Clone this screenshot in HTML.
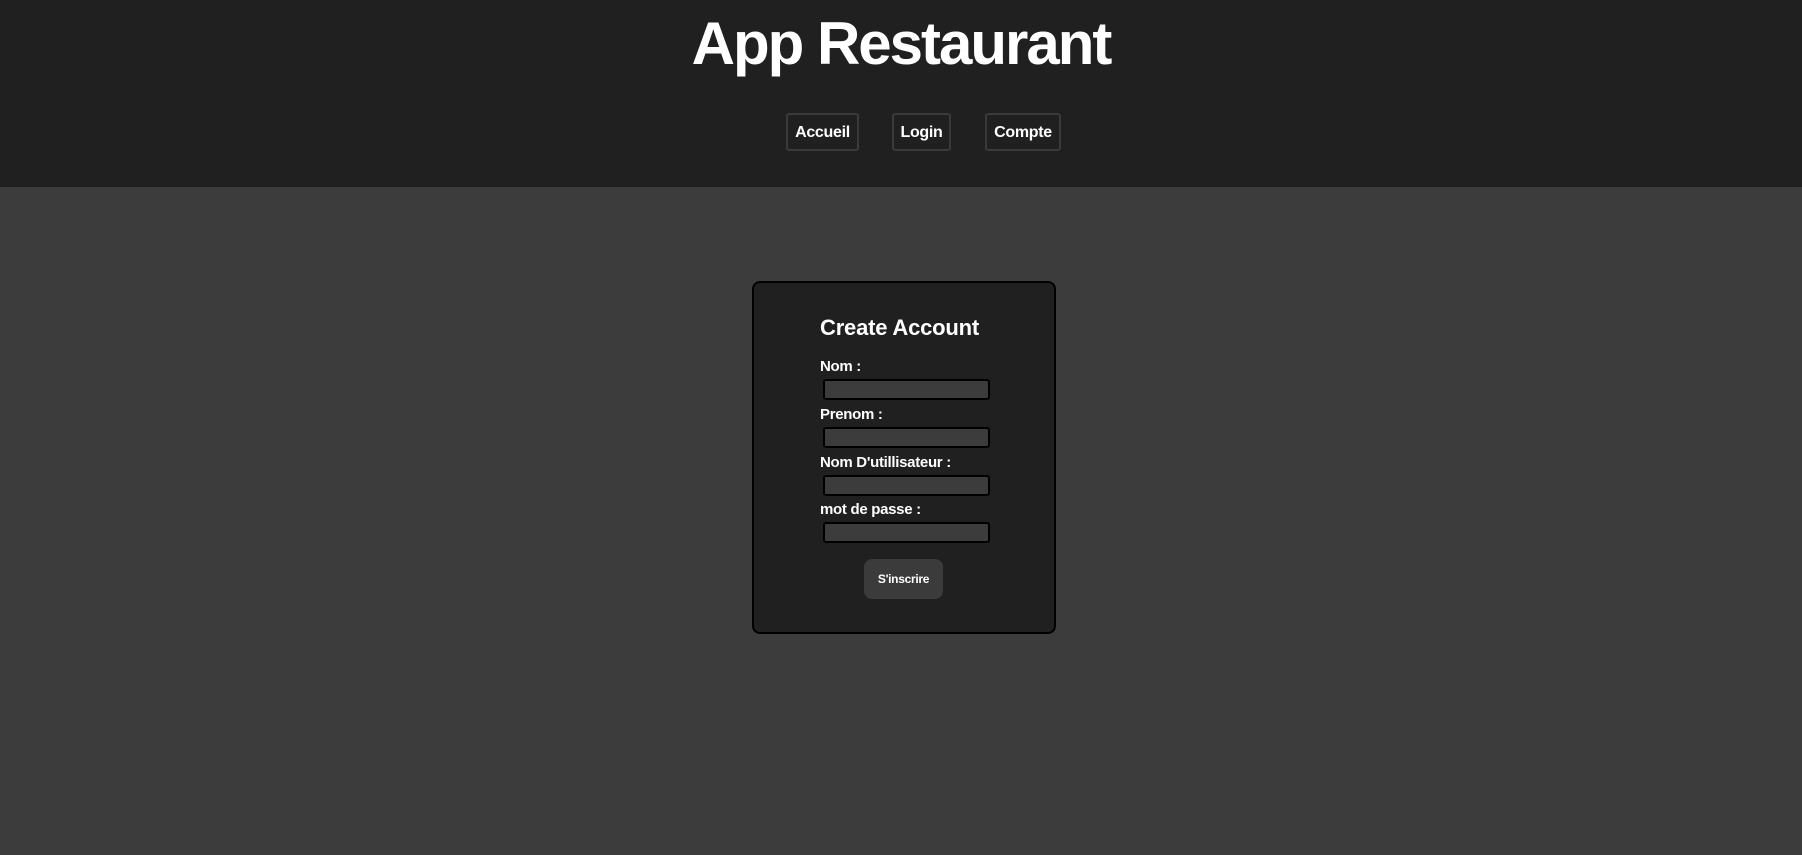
<!DOCTYPE html>
<html><head><meta charset="utf-8"><style>
*{margin:0;padding:0;box-sizing:border-box}
body{width:1802px;height:855px;background:#3c3c3c;font-family:"Liberation Sans",Arial,sans-serif;color:#fff;position:relative;overflow:hidden}
header{position:absolute;left:0;top:0;width:1802px;height:187px;background:#202020}
h1{position:absolute;left:0;width:1802px;text-align:center;top:9px;font-size:60px;line-height:70px;font-weight:bold;letter-spacing:-2px}
.nav{position:absolute;top:113px;height:38px;border:2px solid #3a3a3a;border-radius:3px;font-weight:bold;font-size:16px;line-height:36px;text-align:center;letter-spacing:-0.3px}
.card{position:absolute;left:752px;top:281px;width:304px;height:353px;background:#202020;border:2px solid #000;border-radius:8px}
.t{position:absolute;left:820px;top:315px;font-size:22px;font-weight:bold;letter-spacing:-0.2px}
.l{position:absolute;left:820px;font-size:15px;font-weight:bold;letter-spacing:-0.3px}
.i{position:absolute;left:823px;width:167px;height:21px;background:#3c3c3c;border:2px solid #000;border-radius:3px}
.b{position:absolute;left:864px;top:559px;width:79px;height:40px;background:#3b3b3b;border-radius:8px;font-size:12px;font-weight:bold;text-align:center;line-height:40px;letter-spacing:-0.3px}
</style></head><body>
<header>
<h1>App Restaurant</h1>
<div class="nav" style="left:786px;width:73px">Accueil</div>
<div class="nav" style="left:892px;width:59px">Login</div>
<div class="nav" style="left:985px;width:76px">Compte</div>
</header>
<div class="card"></div>
<div class="t">Create Account</div>
<div class="l" style="top:358px">Nom :</div>
<div class="i" style="top:379px"></div>
<div class="l" style="top:406px">Prenom :</div>
<div class="i" style="top:427px"></div>
<div class="l" style="top:454px">Nom D'utillisateur :</div>
<div class="i" style="top:475px"></div>
<div class="l" style="top:501px">mot de passe :</div>
<div class="i" style="top:522px"></div>
<div class="b">S'inscrire</div>
</body></html>
